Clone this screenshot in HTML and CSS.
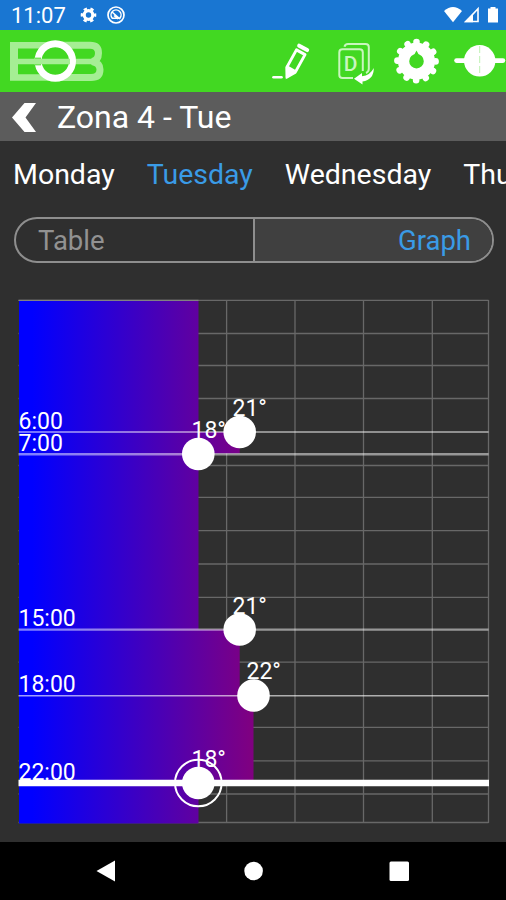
FILE: index.html
```html
<!DOCTYPE html>
<html lang="en">

<head>
    <meta charset="UTF-8">
    <meta name="viewport" content="width=device-width, initial-scale=1.0">
    <title>Zona 4 - Tue</title>
    <link rel="stylesheet" href="styles.css">
</head>

<body>

    <div class="status-bar">
        <span class="clock">11:07</span>
        <svg class="status-left" width="46" height="20" viewBox="0 0 46 20">
            <g fill="none" stroke="#fff">
                <circle cx="8.5" cy="10" r="4.3" stroke-width="3.2" />
                <circle cx="8.5" cy="10" r="6.6" stroke-width="2.4" stroke-dasharray="3.4 3.51" stroke-dashoffset="1.7" />
                <circle cx="36" cy="10" r="8" stroke-width="1.7" />
                <path d="M32.3 13.2A5 5 0 1 1 39.8 13.2Z" stroke-width="1.5" />
                <path d="M32 7l8 7M34 10.5l4 3.5" stroke-width="1.6" />
            </g>
        </svg>
        <svg class="status-right" width="56" height="20" viewBox="0 0 56 20">
            <path d="M1 6Q10 -2 19 6L10 17.3Z" fill="#fff" />
            <path d="M23 16.5H35V3.8Z" fill="none" stroke="#fff" stroke-width="1.6" />
            <path d="M21 17.3L30 8.5V17.3Z" fill="#fff" />
            <path d="M45 3.5h2.5v-1.5h5v1.5h2.5v14h-10z" fill="#fff" />
        </svg>
    </div>

    <div class="app-bar">
        <svg class="logo" width="100" height="44" viewBox="0 0 100 44">
            <g fill="none" stroke="#a5ee94" stroke-width="6.5">
                <path d="M45 5.2H3V37.5H45" />
                <path d="M4 5V37" stroke-width="8" />
                <path d="M4 21.5H84" stroke-width="5.5" />
                <path d="M45 5.2H80Q88.5 5.2 88.5 13Q88.5 20.5 82 21.5Q90 23 90 29.5Q90 37.5 81 37.5H45" stroke-width="7" />
            </g>
            <circle cx="45.3" cy="21" r="14" fill="#42d822" />
            <circle cx="45.3" cy="21" r="17.2" fill="none" stroke="#fff" stroke-width="7" />
            <path d="M24 21.5H60" stroke="#a5ee94" stroke-width="5.5" />
            <path d="M25 18.2H31M25 24.8H31" stroke="#42d822" stroke-width="1" />
        </svg>
        <!-- edit, copy day, settings, connection -->
        <svg class="tools" width="236" height="50" viewBox="270 37 236 50">
            <path d="M273.5 77.2H281.5" stroke="#fff" stroke-width="2.6" stroke-linecap="round" />
            <g transform="translate(286.2 78.5) rotate(29)">
                <path d="M-4.9 -10V-30H4.9V-10L0 -1.6Z" fill="none" stroke="#fff" stroke-width="2.9" stroke-linejoin="round" />
                <path d="M-6 -12H6L0 1Z" fill="#fff" />
                <path d="M-4.6 -35H4.6" stroke="#fff" stroke-width="4" stroke-linecap="round" />
            </g>
            <g fill="none" stroke="#c9f6be" stroke-width="2">
                <path d="M353 78H342.5Q339.3 78 339.3 75V52.5Q339.3 49.3 342.5 49.3H359.5Q362.8 49.3 362.8 52.5V71" />
                <path d="M344.5 46.8Q345 44 348 44H365.5Q368.8 44 368.8 47V69Q368.6 72 366 73" />
            </g>
            <text class="day-letter" x="350.5" y="71" text-anchor="middle">D</text>
            <path d="M354 78.8L362 73V76.3Q370 75.5 373.8 68Q373.8 80 362.5 81.4V84.5Z" fill="#fff" />
            <circle cx="416.5" cy="61.2" r="12.9" fill="none" stroke="#fff" stroke-width="11.2" />
            <circle cx="416.5" cy="61.2" r="19.1" fill="none" stroke="#fff" stroke-width="6.6" stroke-linecap="round" stroke-dasharray="0.01 9.99" transform="rotate(-90 416.5 61.2)" />
            <path d="M416.5 50.5L420 57H413Z" fill="#42d822" />
            <path d="M456.5 60.6H503" stroke="#fff" stroke-width="4.6" stroke-linecap="round" />
            <circle cx="479.7" cy="60.8" r="15.7" fill="#fff" />
            <path d="M479.7 46V76" stroke="#bdf2b2" stroke-width="1" stroke-dasharray="7 3" />
        </svg>
    </div>

    <div class="title-bar">
        <svg class="back" width="26" height="32" viewBox="0 0 26 32">
            <path d="M0 16.5L12.5 2H24L13.5 16.5L24 31H12.5Z" fill="#fff" />
        </svg>
        <h1>Zona 4 - Tue</h1>
    </div>

    <div class="content">
        <div class="days">
            <span class="day">Monday</span>
            <span class="day active">Tuesday</span>
            <span class="day">Wednesday</span>
            <span class="day">Thursday</span>
        </div>

        <div class="switch">
            <div class="option">Table</div>
            <div class="option selected">Graph</div>
        </div>

        <svg class="graph" width="506" height="560" viewBox="0 280 506 560">
            <defs>
                <linearGradient id="heat" gradientUnits="userSpaceOnUse" x1="32" y1="0" x2="253" y2="0">
                    <stop offset="0" stop-color="#0000ff" />
                    <stop offset="1" stop-color="#800080" />
                </linearGradient>
            </defs>

            <!-- grid -->
            <path class="grid" d="M18.5 300.3H488.5M18.5 333.5H488.5M18.5 365.5H488.5M18.5 398.5H488.5M18.5 465.5H488.5M18.5 497.3H488.5M18.5 530.7H488.5M18.5 564H488.5M18.5 597.3H488.5M18.5 662.2H488.5M18.5 727.4H488.5M18.5 760.8H488.5M18.5 794H488.5M18.5 822.5H488.5" />
            <path class="grid" d="M226.6 300V823M295 300V823M363.5 300V823M432.3 300V823M488.5 300V823" />

            <!-- temperature -->
            <path d="M19 301H198.5V432H239.7V453.5H198.5V629.5H239.7V695.5H253.5V783H198.5V823.5H19Z" fill="url(#heat)" />
            <path d="M18.5 300.3H198.5" stroke="#888" />

            <!-- set points -->
            <path class="level" d="M18.5 432H488.5M18.5 695.7H488.5" />
            <path class="level wide" d="M18.5 454.2H488.5M18.5 629.6H488.5" />
            <path class="level current" d="M18.5 783H489" />

            <g class="label">
                <text x="18.5" y="428.5">6:00</text>
                <text x="18.5" y="450.5">7:00</text>
                <text x="18.5" y="626">15:00</text>
                <text x="18.5" y="692">18:00</text>
                <text x="18.5" y="779.5">22:00</text>
                <text x="232.5" y="416">21°</text>
                <text x="191.5" y="438">18°</text>
                <text x="232.5" y="613.5">21°</text>
                <text x="246.5" y="679">22°</text>
                <text x="191.5" y="767">18°</text>
            </g>

            <g fill="#fff">
                <circle cx="239.7" cy="432" r="16.3" />
                <circle cx="198.3" cy="454" r="16.3" />
                <circle cx="239.7" cy="629.5" r="16.3" />
                <circle cx="253.5" cy="695.5" r="16.3" />
                <circle cx="198.3" cy="783" r="16.3" />
            </g>
            <circle cx="198.3" cy="783" r="23.3" fill="none" stroke="#fff" stroke-width="2" />
        </svg>
    </div>

    <div class="nav-bar">
        <svg width="506" height="58" viewBox="0 842 506 58" fill="#fff">
            <path d="M96.5 871L115 860.5V881.5Z" />
            <circle cx="253.6" cy="871" r="9.3" />
            <rect x="389.5" y="861.5" width="19.5" height="19.5" rx="1.5" />
        </svg>
    </div>

</body>

</html>
```

FILE: styles.css
```css
body {
    font-family: Roboto, sans-serif;
    background-color: #2f2f2f;
    color: #fff;
    margin: 0;
    width: 506px;
    height: 900px;
    display: flex;
    flex-direction: column;
    overflow: hidden;
}

svg {
    display: block;
    flex-shrink: 0;
}

.status-bar {
    background-color: #1976d2;
    height: 30px;
    display: flex;
    align-items: center;
    padding: 0 7px 0 11px;
}

.clock {
    font-size: 22px;
    line-height: 30px;
    padding-top: 2px;
}

.status-left {
    margin-left: 14px;
}

.status-right {
    margin-left: auto;
}

.app-bar {
    background-color: #42d822;
    box-sizing: border-box;
    height: 62px;
    display: flex;
    align-items: center;
    justify-content: space-between;
    padding: 2px 0 0 10px;
}

.day-letter {
    font-size: 21px;
    font-weight: 500;
    fill: #c9f6be;
}

.title-bar {
    background-color: #5c5c5c;
    height: 49px;
    display: flex;
    align-items: center;
    padding-left: 12px;
}

h1 {
    font-size: 32px;
    font-weight: 400;
    line-height: 49px;
    margin: 0 0 0 19px;
    padding-top: 2px;
}

.content {
    height: 701px;
}

.days {
    display: flex;
    gap: 32px;
    padding: 17px 0 0 13px;
    height: 60px;
    box-sizing: border-box;
    overflow: hidden;
    font-size: 28.5px;
    line-height: 34px;
}

.day.active {
    color: #3a9be6;
}

.switch {
    display: flex;
    box-sizing: border-box;
    width: 480px;
    height: 46px;
    margin: 16px 0 17px 14px;
    border: 2px solid #8e8e8e;
    border-radius: 23px;
    overflow: hidden;
    font-size: 27.5px;
    line-height: 43px;
}

.option {
    flex: 1;
    color: #929292;
    padding: 0 21px 0 22px;
}

.option.selected {
    background-color: #404040;
    border-left: 2px solid #8e8e8e;
    color: #3a9be6;
    text-align: right;
}

.grid {
    fill: none;
    stroke: #686868;
    stroke-width: 1.3;
}

.level {
    fill: none;
    stroke: #fff;
    stroke-opacity: 0.62;
    stroke-width: 1.5;
}

.level.wide {
    stroke-opacity: 0.5;
    stroke-width: 2.4;
}

.level.current {
    stroke-opacity: 1;
    stroke-width: 6.5;
}

.label {
    font-size: 23px;
    fill: #fff;
}

.nav-bar {
    background-color: #000;
    height: 58px;
}
```
